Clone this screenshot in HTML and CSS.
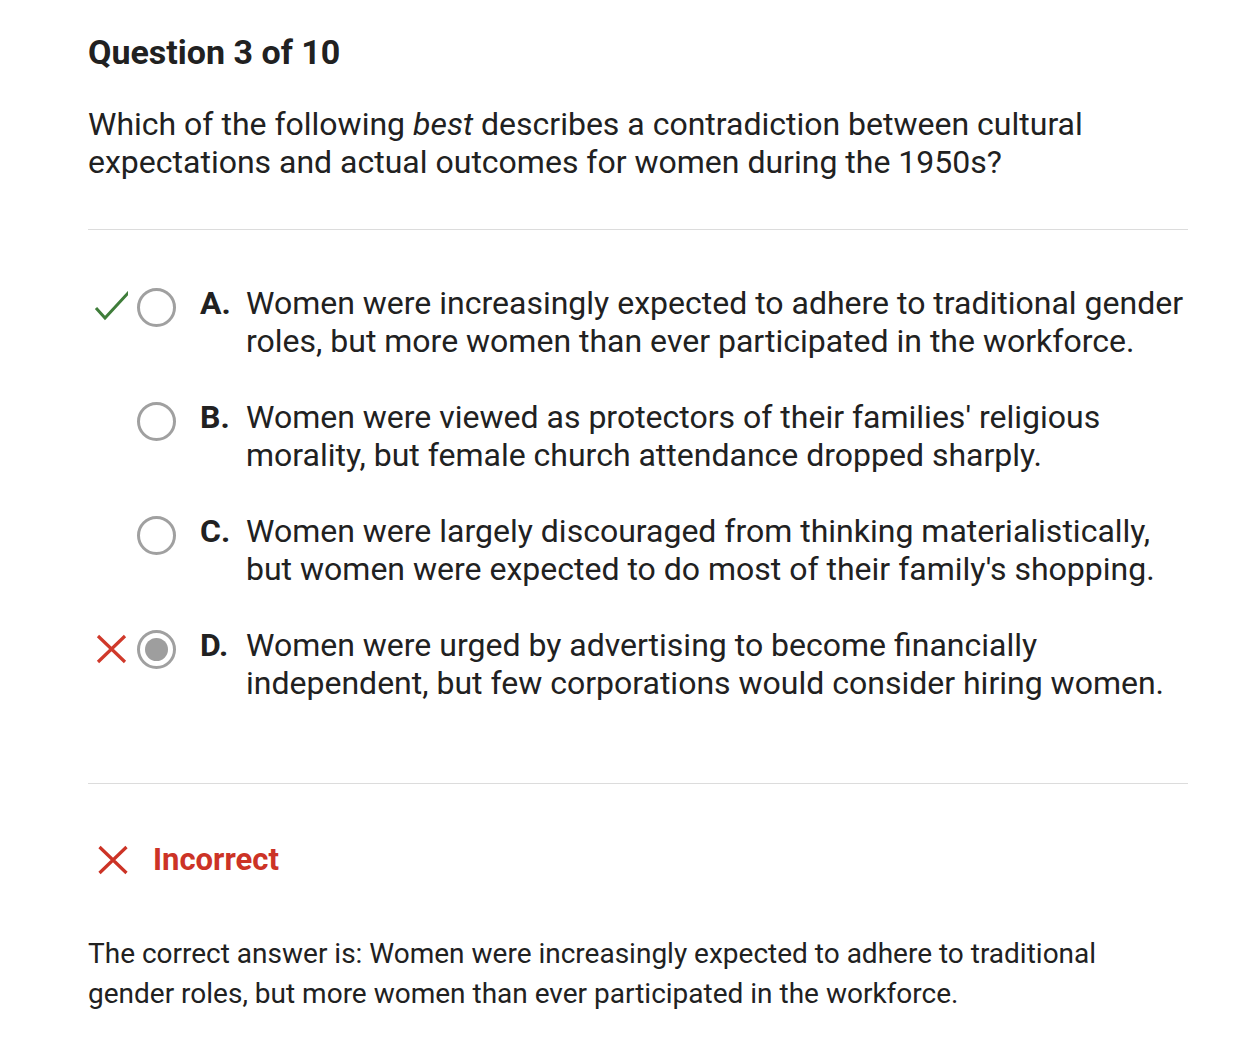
FILE: index.html
```html
<!DOCTYPE html>
<html>
<head>
<meta charset="utf-8">
<link rel="stylesheet" href="styles.css">
</head>
<body>
<div class="page">
  <h1 class="title">Question 3 of 10</h1>
  <p class="question">Which of the following <em>best</em> describes a contradiction between cultural expectations and actual outcomes for women during the 1950s?</p>
  <hr class="sep">
  <div class="options">
    <div class="option">
      <div class="mark">
        <svg width="40" height="40" viewBox="0 0 40 40"><path d="M8 21 L17 31 L41 5" fill="none" stroke="#3f7d3a" stroke-width="3"/></svg>
      </div>
      <div class="radio"></div>
      <div class="letter">A.</div>
      <div class="text">Women were increasingly expected to adhere to traditional gender roles, but more women than ever participated in the workforce.</div>
    </div>
    <div class="option">
      <div class="mark"></div>
      <div class="radio"></div>
      <div class="letter">B.</div>
      <div class="text">Women were viewed as protectors of their families' religious morality, but female church attendance dropped sharply.</div>
    </div>
    <div class="option">
      <div class="mark"></div>
      <div class="radio"></div>
      <div class="letter">C.</div>
      <div class="text">Women were largely discouraged from thinking materialistically, but women were expected to do most of their family's shopping.</div>
    </div>
    <div class="option">
      <div class="mark">
        <svg width="40" height="40" viewBox="0 0 40 40"><path d="M10 7 L37 33 M37 7 L10 33" fill="none" stroke="#d0392b" stroke-width="3.2"/></svg>
      </div>
      <div class="radio selected"><span class="dot"></span></div>
      <div class="letter">D.</div>
      <div class="text">Women were urged by advertising to become financially independent, but few corporations would consider hiring women.</div>
    </div>
  </div>
  <hr class="sep">
  <div class="result">
    <svg width="34" height="34" viewBox="0 0 34 34"><path d="M3.5 4 L30.5 30 M30.5 4 L3.5 30" fill="none" stroke="#cc3326" stroke-width="3.2"/></svg>
    <span class="result-label">Incorrect</span>
  </div>
  <p class="answer">The correct answer is: Women were increasingly expected to adhere to traditional gender roles, but more women than ever participated in the workforce.</p>
</div>
</body>
</html>
```
FILE: styles.css
```css
html, body {
  margin: 0;
  padding: 0;
  background: #ffffff;
}
.page {
  font-family: Roboto, "Liberation Sans", sans-serif;
  color: #212121;
  margin-left: 88px;
  width: 1100px;
  padding-top: 30px;
}
.title {
  font-size: 34px;
  font-weight: 700;
  line-height: 44px;
  margin: 0;
}
.question {
  font-size: 32px;
  line-height: 38px;
  margin: 31px 0 0 0;
}
.question em {
  font-style: italic;
}
.sep {
  border: 0;
  border-top: 1px solid #dcdcdc;
  margin: 48px 0 0 0;
}
.options {
  display: flex;
  flex-direction: column;
  gap: 38px;
  padding-top: 54px;
  padding-bottom: 33px;
}
.option {
  display: flex;
  align-items: flex-start;
  font-size: 32px;
  line-height: 38px;
}
.mark {
  width: 48px;
  height: 38px;
  flex: none;
  display: flex;
  align-items: center;
  justify-content: flex-start;
  margin-top: 4px;
  margin-right: 1px;
}
.radio {
  width: 39px;
  height: 39px;
  border: 3px solid #a0a0a0;
  border-radius: 50%;
  flex: none;
  margin-top: 4px;
  box-sizing: border-box;
  display: flex;
  align-items: center;
  justify-content: center;
}
.radio .dot {
  width: 23px;
  height: 23px;
  border-radius: 50%;
  background: #9e9e9e;
}
.letter {
  font-weight: 700;
  width: 46px;
  margin-left: 24px;
  flex: none;
}
.text {
  flex: 1;
}
.result {
  display: flex;
  align-items: center;
  gap: 23px;
  margin-top: 57px;
  margin-left: 8px;
}
.result-label {
  color: #cc3326;
  font-weight: 700;
  font-size: 31px;
  line-height: 38px;
}
.answer {
  font-size: 28px;
  line-height: 40px;
  margin: 55px 0 0 0;
  width: 1040px;
}
```
